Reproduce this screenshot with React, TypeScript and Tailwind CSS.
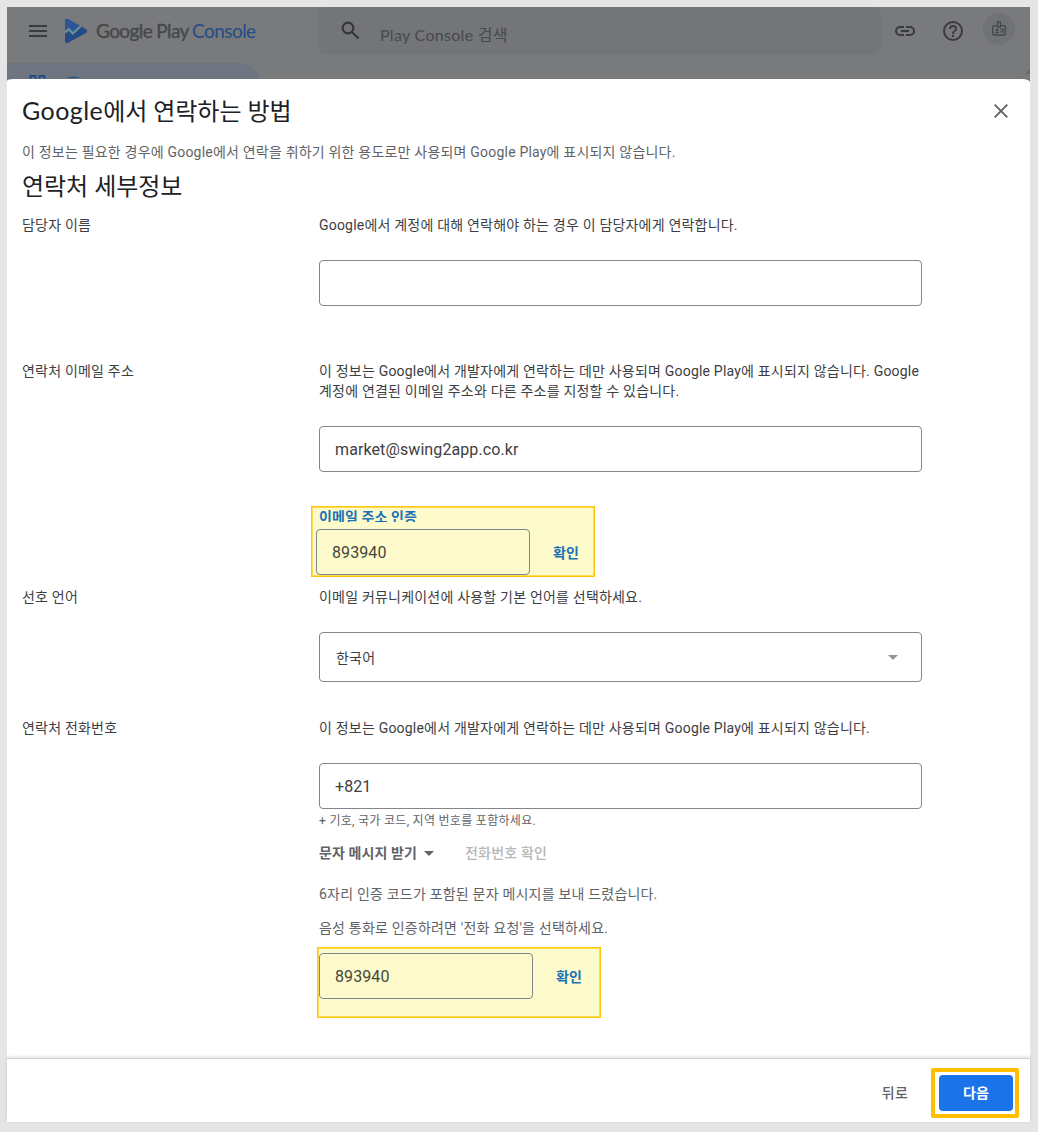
import React from "react";

const BODY = "font-['Roboto','Noto_Sans_CJK_KR',sans-serif]";
const DISPLAY = "font-['Lato','Noto_Sans_CJK_KR',sans-serif]";

function Row({ label, height, children }: { label: string; height: string; children: React.ReactNode }) {
  return (
    <section className={`flex shrink-0 ${height}`}>
      <div className="w-[297px] shrink-0 text-[#3c4043]">{label}</div>
      <div className="w-[603px] shrink-0 text-[#3c4043]">{children}</div>
    </section>
  );
}

function Field({ value = "", className }: { value?: string; className: string }) {
  return (
    <div className={`flex h-[46px] items-center rounded-[4px] border border-[#80868b] px-[15px] pt-[2px] text-base tracking-[0.1px] text-[#3c4043] ${className}`}>
      {value}
    </div>
  );
}

function ConfirmCode() {
  return (
    <div className="flex items-center">
      <Field className="w-[214px] border-[#7d8070] text-[#44473d]" value="893940" />
      <span className="ml-[23px] pt-[2px] font-bold text-[#1a73b8]">확인</span>
    </div>
  );
}

function Header() {
  return (
    <header className="flex h-[72px] flex-col overflow-hidden bg-[#797a7c]">
      <div className="flex h-12 shrink-0">
        <div className="flex w-[311px] shrink-0 items-center pl-[22px]">
          <svg width="18" height="12" viewBox="0 0 18 12" fill="#3a3b3e">
            <path d="M0 0h18v2H0zM0 5h18v2H0zM0 10h18v2H0z" />
          </svg>
          <svg className="ml-[17px]" width="24" height="26" viewBox="0 0 24 26">
            <path d="M1 3Q1 0 4 1.2L22 11q2 2 0 4L4 24.8Q1 26 1 23z" fill="#254b86" />
            <path d="M1 13l3.6-2.5 4 4.2L16 7.8 4 1.2Q1 0 1 3z" fill="#2d5698" />
            <path d="M1 14.3l3.8-3 4 4.2L16.8 8" fill="none" stroke="#6d9296" strokeWidth="2.2" />
          </svg>
          <div className={`ml-[8px] flex gap-[3px] whitespace-nowrap text-[19px] ${DISPLAY}`}>
            <span className="w-[93px] text-[#45474a] tracking-[-0.6px] [-webkit-text-stroke:0.35px_#45474a]">Google Play</span>
            <span className="text-[#254b86] tracking-[-0.55px]">Console</span>
          </div>
        </div>
        <div className="flex w-[563px] items-start rounded-lg bg-[#737578]">
          <svg className="ml-[23px] mt-[14px]" width="20" height="20" viewBox="0 0 20 20" fill="none" stroke="#36373a" strokeWidth="2.1">
            <circle cx="7" cy="7" r="5.4" />
            <path d="M11 11l6.500 6.500" />
          </svg>
          <span className={`ml-[19px] mt-[16px] text-base leading-6 tracking-[0.3px] text-[#47494d] ${DISPLAY}`}>Play Console 검색</span>
        </div>
        <svg className="ml-[14px] mt-[18px] shrink-0" width="20" height="12" viewBox="0 0 20 12" fill="none" stroke="#3a3b3e" strokeWidth="2">
          <path d="M9 2H5a4 4 0 000 8h4M11 2h4a4 4 0 010 8h-4M6 6h8" />
        </svg>
        <svg className="ml-[26px] mt-[12px] shrink-0" width="24" height="24" viewBox="0 0 24 24" fill="#3a3b3e">
          <path d="M11 18h2v-2h-2zM12 2a10 10 0 100 20 10 10 0 000-20m0 18a8 8 0 110-16 8 8 0 010 16m0-14a4 4 0 00-4 4h2a2 2 0 114 0c0 2-3 1.75-3 5h2c0-2.25 3-2.5 3-5a4 4 0 00-4-4" />
        </svg>
        <div className="ml-[18px] mt-[6px] flex size-8 shrink-0 items-center justify-center rounded-full bg-[#717276]">
          <svg width="14" height="16" viewBox="0 0 14 16" fill="none" stroke="#45474b" strokeWidth="1.3">
            <path d="M5.5 4.6H1.6a.9.9 0 00-.9.9v7.600a.9.9 0 00.9.9h10.800a.9.9 0 00.9-.9V5.500a.9.9 0 00-.9-.9H8.500M5.500 1h3v5h-3zM8.500 8.500H12M8.500 10.800H12M3 11.500h4" />
            <circle cx="5" cy="8.800" r=".7" />
          </svg>
        </div>
      </div>
      <div className="flex shrink-0 items-start justify-between">
        <div className="mt-[8px] flex h-10 w-[253px] shrink-0 rounded-tr-[20px] bg-[#6e7480]">
          <svg className="ml-[22px] mt-[12px]" width="18" height="18" viewBox="0 0 18 18" fill="none" stroke="#254b86" strokeWidth="2">
            <rect x="1.500" y="1" width="5" height="6" />
            <rect x="10.500" y="1" width="5" height="6" />
          </svg>
          <span className="ml-[20px] mt-[10px] text-sm leading-5 text-[#254b86]">홈</span>
        </div>
        <svg className="mt-[15px]" width="5" height="4" viewBox="0 0 5 4" fill="#66686b"><path d="M0 4l4-4h1v4z" /></svg>
      </div>
    </header>
  );
}

export default function App() {
  return (
    <div className={`h-[1132px] w-[1038px] bg-[#e5e5e5] pl-[7px] pt-[7px] text-sm leading-5 tracking-[0.2px] ${BODY}`}>
      <div className="w-[1023px] bg-[#797a7c]">
        <Header />
        <main className="flex h-[1043px] flex-col rounded-tl-[7px_2px] rounded-tr-[8px_3px] bg-white">
          <div className="flex h-[979px] shrink-0 flex-col pl-[15px] pt-[15px]">
            <div className="flex h-8 items-center justify-between pr-[22px]">
              <h1 className={`text-2xl leading-8 tracking-[-0.06px] text-[#202124] ${DISPLAY}`}>
                <span className="text-[25px] tracking-[0.45px]">Google</span>에서 연락하는 방법
              </h1>
              <svg className="mt-[2px]" width="14" height="14" viewBox="0 0 14 14" stroke="#5f6368" strokeWidth="1.900">
                <path d="M.7.7l12.600 12.600M13.300.7L.7 13.300" />
              </svg>
            </div>
            <p className="mt-[16px] text-[#5f6368]">이 정보는 필요한 경우에 Google에서 연락을 취하기 위한 용도로만 사용되며 Google Play에 표시되지 않습니다.</p>
            <h2 className={`mb-[13px] mt-[8px] text-2xl leading-8 tracking-[-0.06px] text-[#202124] ${DISPLAY}`}>연락처 세부정보</h2>

            <Row label="담당자 이름" height="h-[146px]">
              <p>Google에서 계정에 대해 연락해야 하는 경우 이 담당자에게 연락합니다.</p>
              <Field className="mt-[25px]" />
            </Row>

            <Row label="연락처 이메일 주소" height="h-[226px]">
              <p className="whitespace-nowrap">
                이 정보는 Google에서 개발자에게 연락하는 데만 사용되며 Google Play에 표시되지 않습니다. Google<br />
                계정에 연결된 이메일 주소와 다른 주소를 지정할 수 있습니다.
              </p>
              <Field className="mt-[25px]" value="market@swing2app.co.kr" />
              <div className="-ml-[8px] mt-[34px] h-[71px] w-[284px] border border-[#ffc60a] bg-[#fdfacb] p-px shadow-[inset_0_0_0_1px_#fddb55]">
                <div className="ml-[6px] h-[14px] overflow-hidden font-bold leading-[18px] tracking-[0.1px] text-[#1a73b8]">이메일 주소 인증</div>
                <div className="ml-[3px] mt-[7px]">
                  <ConfirmCode />
                </div>
              </div>
            </Row>

            <Row label="선호 언어" height="h-[131px]">
              <p>이메일 커뮤니케이션에 사용할 기본 언어를 선택하세요.</p>
              <div className="mt-[25px] flex h-[50px] items-center justify-between rounded-[4px] border border-[#80868b] pl-4 pr-[23px]">
                <span className="pt-[2px]">한국어</span>
                <svg width="10" height="5" viewBox="0 0 10 5" fill="#929496"><path d="M0 0h10L5 5z" /></svg>
              </div>
            </Row>

            <Row label="연락처 전화번호" height="h-[300px]">
              <p>이 정보는 Google에서 개발자에게 연락하는 데만 사용되며 Google Play에 표시되지 않습니다.</p>
              <Field className="mt-[25px]" value="+821" />
              <div className="text-[#5f6368]">
                <p className="mt-[4px] text-xs leading-4 tracking-[0.3px]">+ 기호, 국가 코드, 지역 번호를 포함하세요.</p>
                <div className="mt-[14px] flex items-center">
                  <span className="w-[97px] whitespace-nowrap font-bold tracking-[0.1px]">문자 메시지 받기</span>
                  <svg className="ml-[8px]" width="10" height="5" viewBox="0 0 10 5" fill="#5f6368"><path d="M0 0h10L5 5z" /></svg>
                  <span className="ml-[31px] font-medium text-[#b5b6b8]">전화번호 확인</span>
                </div>
                <p className="mt-[21px]">6자리 인증 코드가 포함된 문자 메시지를 보내 드렸습니다.</p>
                <p className="mt-[14px]">음성 통화로 인증하려면 '전화 요청'을 선택하세요.</p>
              </div>
              <div className="-ml-[2px] mt-[9px] h-[71px] w-[284px] border border-[#ffc60a] bg-[#fdfacb] px-px pt-[5px] shadow-[inset_0_0_0_1px_#fddb55]">
                <ConfirmCode />
              </div>
            </Row>
          </div>
          <footer className="flex h-16 items-center justify-end border-t border-[#d2d2d2] bg-white pr-[11px] pt-[5px] shadow-[0_-1px_3px_rgba(0,0,0,0.15)]">
            <span className="mr-[23px] font-medium text-[#5f6368]">뒤로</span>
            <div className="h-[50px] w-[88px] rounded-[2px] border-4 border-[#ffbf00] p-[3px] pl-[4px]">
              <button className="flex h-9 w-[74px] items-center justify-center rounded-[4px] bg-[#1a73e8] font-bold text-white">다음</button>
            </div>
          </footer>
        </main>
      </div>
    </div>
  );
}
